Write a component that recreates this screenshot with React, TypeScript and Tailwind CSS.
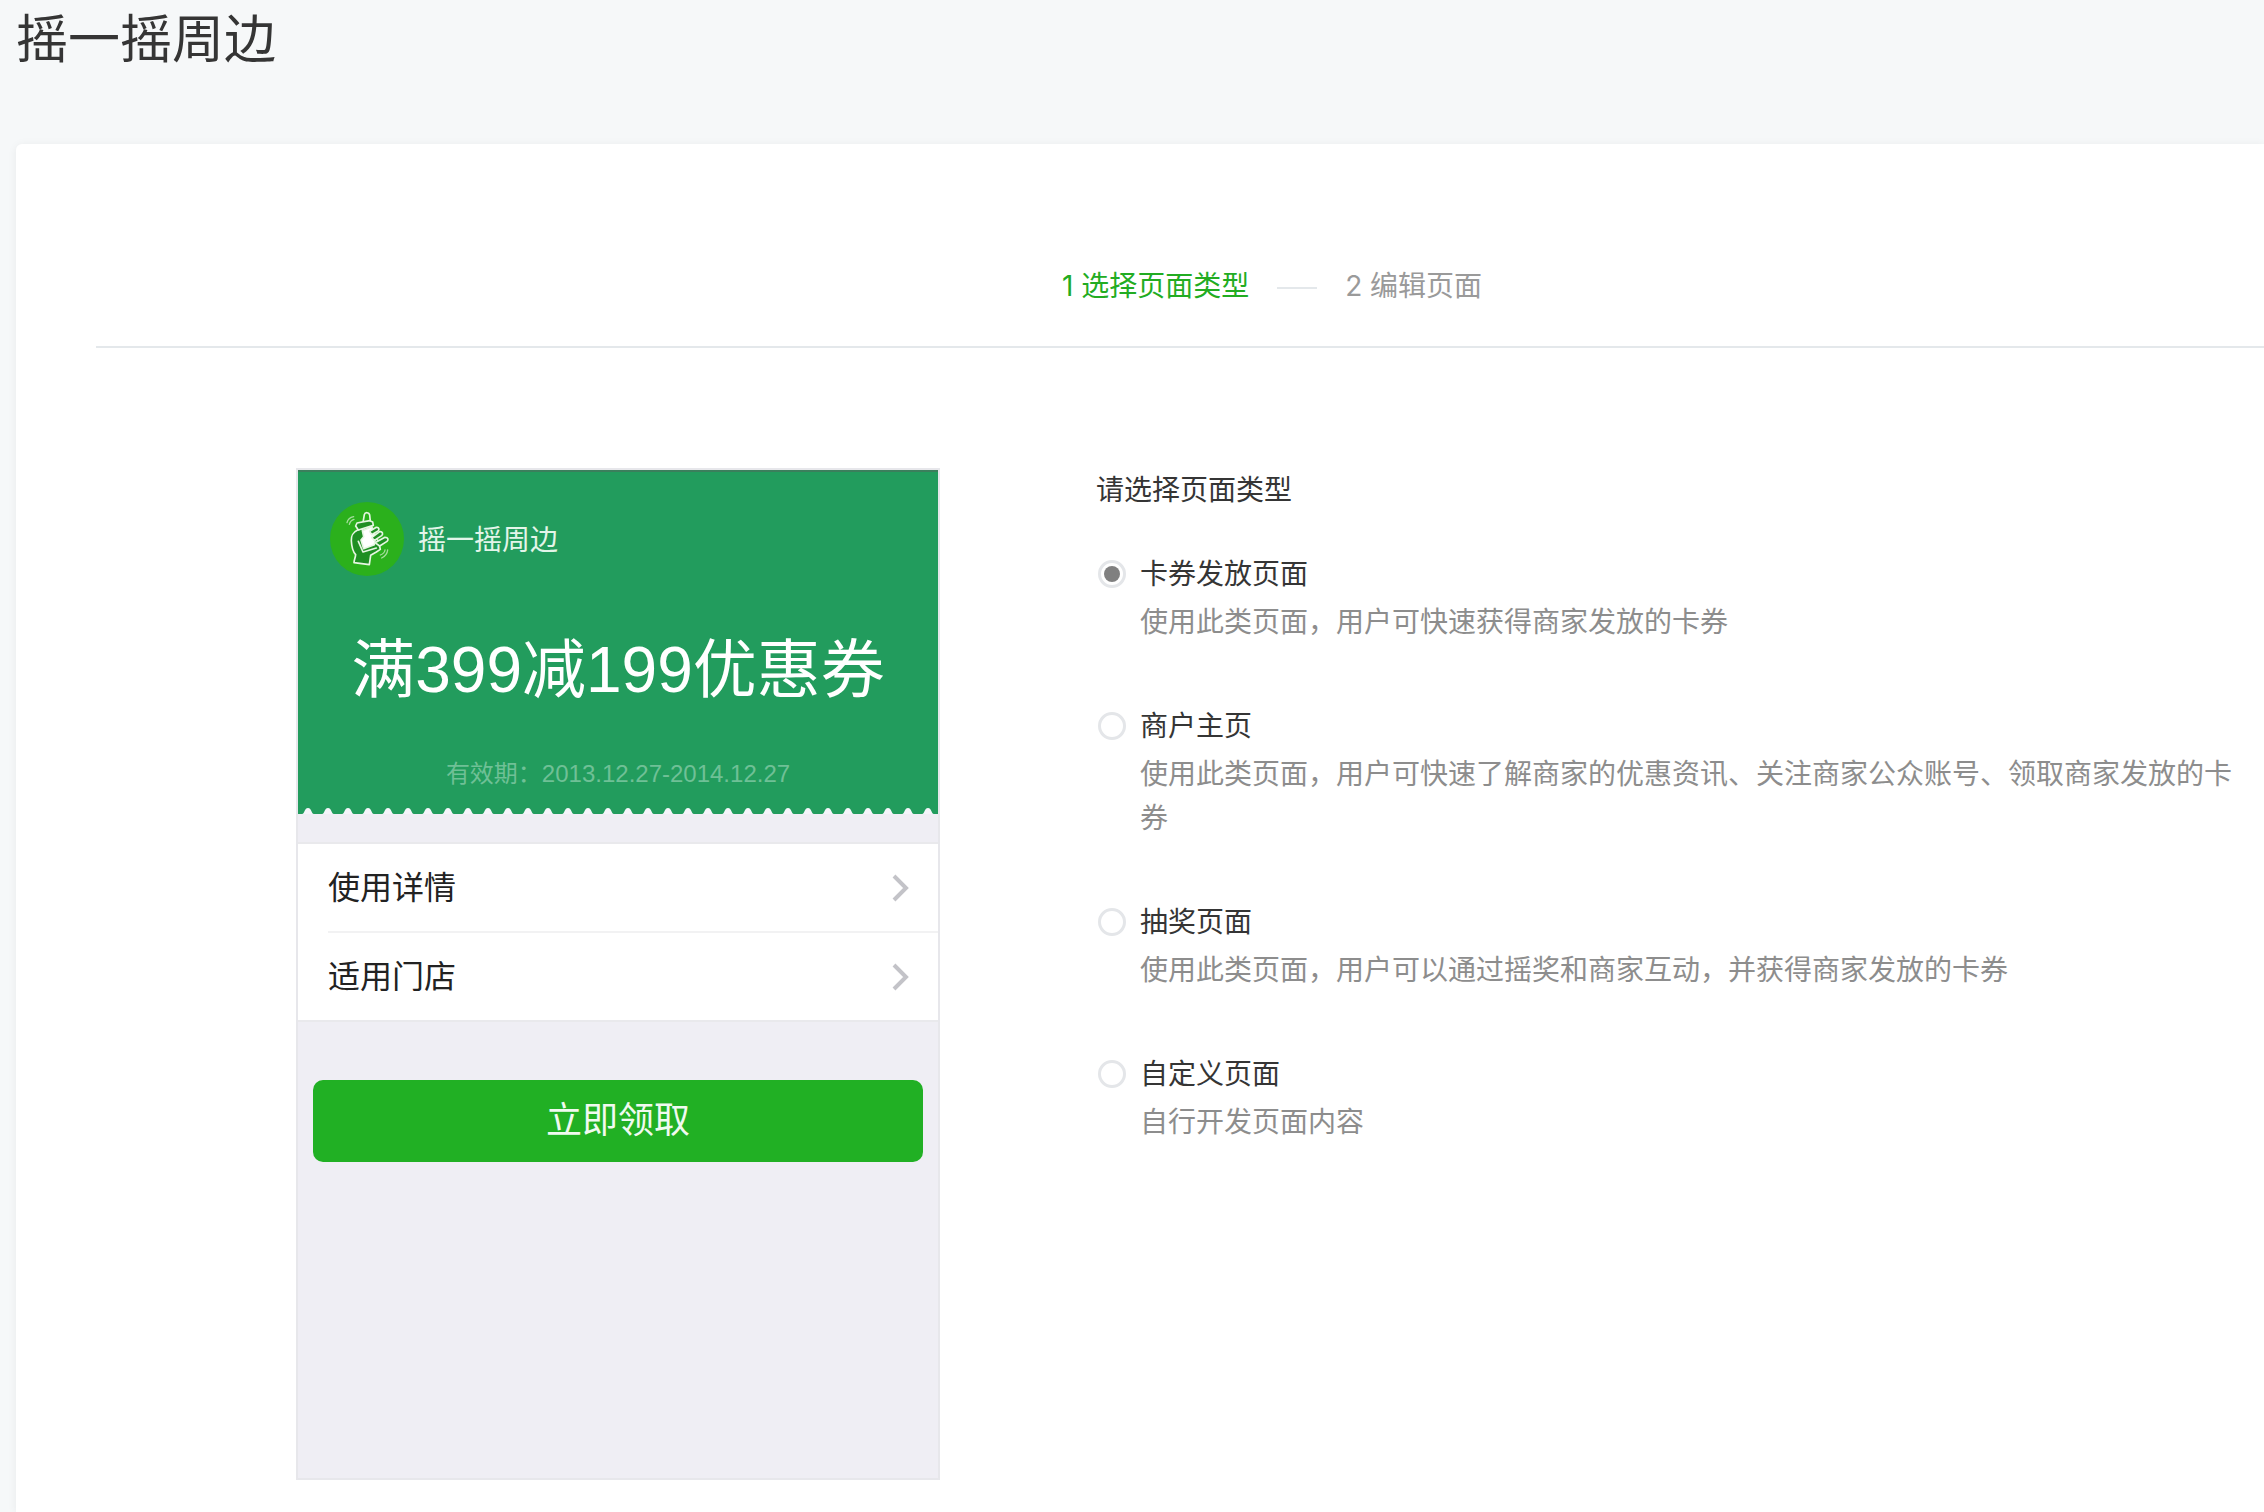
import { useState } from "react";

type PageType = {
  id: string;
  title: string;
  desc: string;
};

const pageTypes: PageType[] = [
  { id: "card",    title: "卡券发放页面", desc: "使用此类页面，用户可快速获得商家发放的卡券" },
  { id: "home",    title: "商户主页",     desc: "使用此类页面，用户可快速了解商家的优惠资讯、关注商家公众账号、领取商家发放的卡券" },
  { id: "lottery", title: "抽奖页面",     desc: "使用此类页面，用户可以通过摇奖和商家互动，并获得商家发放的卡券" },
  { id: "custom",  title: "自定义页面",   desc: "自行开发页面内容" },
];

const previewLinks = ["使用详情", "适用门店"];

function ShakeLogo() {
  return (
    <svg viewBox="27 36 222 222" className="h-[74px] w-[74px] shrink-0" aria-hidden="true">
      <circle cx="138" cy="147" r="111" fill="#2bb01c" />
      <g stroke="#e6f6e2" strokeWidth="5" strokeLinejoin="round" strokeLinecap="round">
        {/* wrist and palm */}
        <path d="M110 120C96 126 90 140 91 152C92 172 95 184 104 194C103 204 99 210 99 218L145 224L149 196L166 186L178 178L172 152L120 116Z" fill="#1f8f23" />
        {/* index finger */}
        <path d="M126 98L130 74C132 66 144 66 146 75L148 94Z" fill="#2bb01c" />
        <path d="M104 108L108 99L146 92L155 96L157 106L112 120Z" fill="#1f8f23" />
        {/* phone */}
        <path d="M124 122L152 110L164 138L160 164L128 176L120 150L128 140Z" fill="#fff" />
        <path d="M112 154L126 186L166 174" fill="none" />
        {/* fingers */}
        <path d="M146 124L166 112C174 111 176 119 171 123L152 134Z" fill="#1f8f23" />
        <path d="M152 143L176 125C185 124 187 132 182 137L160 151Z" fill="#1f8f23" />
        <path d="M162 158L192 142C202 142 203 149 198 154L176 168Z" fill="#1f8f23" />
      </g>
      <g fill="none" stroke="#a5dd9c" strokeWidth="4" strokeLinecap="round">
        <path d="M78 98C80 88 88 82 98 80M85 103C87 95 92 90 99 88" />
        <path d="M200 180C199 190 192 199 182 204M192 180C191 187 186 192 178 195" />
      </g>
    </svg>
  );
}

function PerforatedEdge() {
  return (
    <svg className="block h-1.5 w-full" aria-hidden="true">
      <defs>
        <pattern id="perforation" width="20" height="6" patternUnits="userSpaceOnUse">
          <path d="M4 6C7 6 6 0 10 0S13 6 16 6Z" fill="#f4f5fa" />
        </pattern>
      </defs>
      <rect width="100%" height="6" fill="url(#perforation)" />
    </svg>
  );
}

function CouponPreview() {
  return (
    <section className="h-[1012px] w-[644px] shrink-0 border-2 border-[#e7e7eb] bg-[#efeef4] font-['Liberation_Sans','Noto_Sans_CJK_SC',sans-serif]">
      <div className="border-t-2 border-[#3b7f5c] bg-[#229c5d] text-center text-white">
        <div className="flex items-center gap-3.5 pt-[30px] pl-8">
          <ShakeLogo />
          <span className="pt-1 text-[28px] leading-10 text-[#e3f5e9]">摇一摇周边</span>
        </div>
        <h2 className="mt-[50px] text-[64px] leading-[88px] font-normal">满399减199优惠券</h2>
        <p className="mt-11 pb-[18px] text-2xl leading-8 text-[#6fc096]">有效期：2013.12.27-2014.12.27</p>
        <PerforatedEdge />
      </div>

      <ul className="mt-7 border-y-2 border-[#e9e9ec] bg-white pl-[30px]">
        {previewLinks.map((label) => (
          <li key={label} className="border-t-2 border-[#f2f2f3] first:border-t-0">
            <a href="#" className="flex h-[87px] items-center justify-between pr-7 text-[32px] text-[#222]">
              {label}
              <svg viewBox="0 0 20 28" className="h-7 w-5" fill="none" stroke="#c3c3c8" strokeWidth="4" aria-hidden="true">
                <path d="M4 2L16 14L4 26" />
              </svg>
            </a>
          </li>
        ))}
      </ul>

      <div className="px-[15px] pt-[58px]">
        <button type="button" className="h-[82px] w-full rounded-[10px] bg-[#21b024] text-4xl text-[#f0faf0]">
          立即领取
        </button>
      </div>
    </section>
  );
}

export default function App() {
  const [selected, setSelected] = useState("card");

  return (
    <div className="flex min-h-screen flex-col overflow-hidden bg-[#f6f8f9] pl-4 font-['Inter','Noto_Sans_CJK_SC',sans-serif] text-[28px] leading-[44px] text-[#353535]">
      <h1 className="pb-16 text-[52px] leading-[80px]">摇一摇周边</h1>

      <main className="flex-1 rounded-tl-md bg-white pl-20 shadow-[0_1px_10px_rgba(0,0,0,0.06)]">
        <ol className="flex items-center justify-center gap-7 border-b-2 border-[#e4e8eb] pt-[120px] pb-[38px] pl-[184px]">
          <li className="text-[#22ac22]">1 选择页面类型</li>
          <li className="mt-1 h-0.5 w-10 bg-[#e4e8eb]" aria-hidden="true" />
          <li className="text-[#9a9a9a]">2 编辑页面</li>
        </ol>

        <div className="flex gap-[156px] pt-[120px] pl-[200px]">
          <CouponPreview />

          <fieldset className="min-w-0 flex-1 pr-4">
            <legend className="mb-10">请选择页面类型</legend>
            <div className="flex flex-col gap-[60px]">
              {pageTypes.map((type) => (
                <div key={type.id} className="flex gap-3.5 pl-0.5">
                  <input
                    type="radio"
                    id={type.id}
                    name="pageType"
                    checked={selected === type.id}
                    onChange={() => setSelected(type.id)}
                    className="mt-2 grid h-7 w-7 shrink-0 appearance-none place-items-center rounded-full border-3 border-[#e4e6e9] before:h-4 before:w-4 before:rounded-full checked:before:bg-[#808080]"
                  />
                  <div className="min-w-0">
                    <label htmlFor={type.id} className="block">{type.title}</label>
                    <p className="mt-1 text-[#8d8d8d]">{type.desc}</p>
                  </div>
                </div>
              ))}
            </div>
          </fieldset>
        </div>
      </main>
    </div>
  );
}
